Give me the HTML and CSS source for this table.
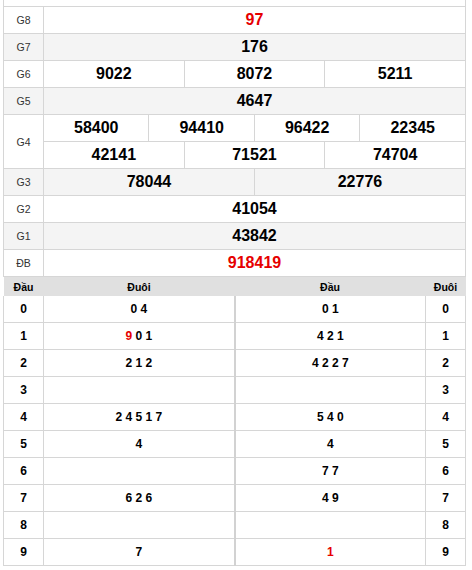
FILE: index.html
```html
<!DOCTYPE html>
<html lang="vi">
<head>
<meta charset="utf-8">
<title>Kết quả xổ số</title>
<link rel="stylesheet" href="styles.css">
</head>
<body>
<div class="page">
  <table class="kq">
    <colgroup><col class="c-lbl"><col span="12"></colgroup>
    <tr class="cut"><td colspan="13"></td></tr>
    <tr><td class="lbl">G8</td><td colspan="12" class="red">97</td></tr>
    <tr class="alt"><td class="lbl">G7</td><td colspan="12">176</td></tr>
    <tr><td class="lbl">G6</td><td colspan="4">9022</td><td colspan="4">8072</td><td colspan="4">5211</td></tr>
    <tr class="alt"><td class="lbl">G5</td><td colspan="12">4647</td></tr>
    <tr><td class="lbl" rowspan="2">G4</td><td colspan="3">58400</td><td colspan="3">94410</td><td colspan="3">96422</td><td colspan="3">22345</td></tr>
    <tr><td colspan="4">42141</td><td colspan="4">71521</td><td colspan="4">74704</td></tr>
    <tr class="alt"><td class="lbl">G3</td><td colspan="6">78044</td><td colspan="6">22776</td></tr>
    <tr><td class="lbl">G2</td><td colspan="12">41054</td></tr>
    <tr class="alt"><td class="lbl">G1</td><td colspan="12">43842</td></tr>
    <tr><td class="lbl">ĐB</td><td colspan="12" class="red">918419</td></tr>
  </table>
  <table class="loto">
    <colgroup><col class="c-a"><col class="c-b"><col class="c-c"><col class="c-d"></colgroup>
    <tr class="head"><th>Đầu</th><th>Đuôi</th><th class="mid">Đầu</th><th>Đuôi</th></tr>
    <tr><td>0</td><td>0 4</td><td class="mid">0 1</td><td>0</td></tr>
    <tr><td>1</td><td><span class="red">9</span> 0 1</td><td class="mid">4 2 1</td><td>1</td></tr>
    <tr><td>2</td><td>2 1 2</td><td class="mid">4 2 2 7</td><td>2</td></tr>
    <tr><td>3</td><td></td><td class="mid"></td><td>3</td></tr>
    <tr><td>4</td><td>2 4 5 1 7</td><td class="mid">5 4 0</td><td>4</td></tr>
    <tr><td>5</td><td>4</td><td class="mid">4</td><td>5</td></tr>
    <tr><td>6</td><td></td><td class="mid">7 7</td><td>6</td></tr>
    <tr><td>7</td><td>6 2 6</td><td class="mid">4 9</td><td>7</td></tr>
    <tr><td>8</td><td></td><td class="mid"></td><td>8</td></tr>
    <tr><td>9</td><td>7</td><td class="mid"><span class="red">1</span></td><td>9</td></tr>
  </table>
</div>
</body>
</html>
```

FILE: styles.css
```css
html, body {
  margin: 0;
  padding: 0;
  background: #fff;
}
.page {
  padding-left: 3px;
  font-family: "Liberation Sans", Arial, sans-serif;
  color: #000;
}
table {
  border-collapse: collapse;
  table-layout: fixed;
  width: 463px;
}
.kq td {
  border: 1px solid #d6d6d6;
  height: 26px;
  padding: 0;
  text-align: center;
  vertical-align: middle;
  font-size: 16px;
  font-weight: bold;
  line-height: 18px;
}
.kq .c-lbl { width: 40px; }
.kq .cut td {
  height: 6px;
  border-top: 0;
}
.kq td.lbl {
  font-size: 10.5px;
  font-weight: normal;
  color: #333;
}
.kq .alt td { background: #f4f4f4; }
.red { color: #e60000; }

.loto .c-a { width: 40px; }
.loto .c-b { width: 191px; }
.loto .c-c { width: 191px; }
.loto .c-d { width: 40px; }
.loto th {
  background: #e0e0e0;
  height: 19px;
  padding: 0;
  font-size: 10.5px;
  font-weight: bold;
  border: hidden;
  line-height: 12px;
}
.loto th.mid { border-left: 1px solid #ececec; }
.loto td {
  border: 1px solid #d6d6d6;
  height: 26px;
  padding: 0;
  text-align: center;
  vertical-align: middle;
  font-size: 12px;
  font-weight: bold;
  line-height: 14px;
}
.loto td.mid { border-left: 2px solid #d2d2d2; }
```
